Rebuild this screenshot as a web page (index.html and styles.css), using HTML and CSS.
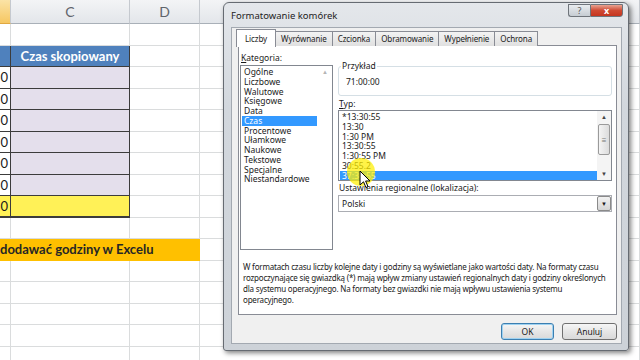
FILE: index.html
```html
<!DOCTYPE html>
<html lang="pl">
<head>
  <meta charset="UTF-8">
  <title>Formatowanie komórek</title>
  <link rel="stylesheet" href="styles.css">
</head>
<body>
<div class="screen">

  <!-- arkusz w tle -->
  <div class="sheet">
    <div class="hdr sel"></div><div class="hdr">C</div><div class="hdr">D</div><div class="hdr"></div>

    <div></div><div></div><div></div><div></div>

    <div class="t-b t-head"></div><div class="t-c t-head">Czas skopiowany</div><div></div><div></div>

    <div class="t-b num">0</div><div class="t-c lav"></div><div></div><div></div>
    <div class="t-b num">0</div><div class="t-c lav"></div><div></div><div></div>
    <div class="t-b num">0</div><div class="t-c lav"></div><div></div><div></div>
    <div class="t-b num">0</div><div class="t-c lav"></div><div></div><div></div>
    <div class="t-b num">0</div><div class="t-c lav"></div><div></div><div></div>
    <div class="t-b num">0</div><div class="t-c lav"></div><div></div><div></div>
    <div class="t-b num yel last">0</div><div class="t-c yel last"></div><div></div><div></div>

    <div></div><div></div><div></div><div></div>

    <div class="banner">dodawać godziny w Excelu</div><div></div>

    <div></div><div></div><div></div><div></div>
    <div></div><div></div><div></div><div></div>
    <div></div><div></div><div></div><div></div>
    <div></div><div></div><div></div><div></div>
    <div></div><div></div><div></div><div></div>
  </div>

  <!-- okno dialogowe -->
  <div class="dialog">
    <div class="titlebar">
      <span class="title">Formatowanie komórek</span>
      <div class="caption">
        <span class="cap-help">?</span>
        <span class="cap-close">x</span>
      </div>
    </div>

    <div class="client">
      <div class="tabs">
        <span class="tab active">Liczby</span>
        <span class="tab">Wyrównanie</span>
        <span class="tab">Czcionka</span>
        <span class="tab">Obramowanie</span>
        <span class="tab">Wypełnienie</span>
        <span class="tab">Ochrona</span>
      </div>

      <div class="panel">
        <div class="cols">
          <div class="col-left">
            <div class="lbl"><u>K</u>ategoria:</div>
            <div class="listbox cat">
              <div class="items">
                <div class="item">Ogólne</div>
                <div class="item">Liczbowe</div>
                <div class="item">Walutowe</div>
                <div class="item">Księgowe</div>
                <div class="item">Data</div>
                <div class="item selected">Czas</div>
                <div class="item">Procentowe</div>
                <div class="item">Ułamkowe</div>
                <div class="item">Naukowe</div>
                <div class="item">Tekstowe</div>
                <div class="item">Specjalne</div>
                <div class="item">Niestandardowe</div>
              </div>
              <div class="vscroll off">
                <span class="arrow">▲</span>
              </div>
            </div>
          </div>

          <div class="col-right">
            <fieldset class="group">
              <legend>Przykład</legend>
              <div class="sample">71:00:00</div>
            </fieldset>

            <div class="lbl typ"><u>T</u>yp:</div>
            <div class="listbox types">
              <div class="items">
                <div class="item">*13:30:55</div>
                <div class="item">13:30</div>
                <div class="item">1:30 PM</div>
                <div class="item">13:30:55</div>
                <div class="item">1:30:55 PM</div>
                <div class="item">30:55.2</div>
                <div class="item selected">37:30:55</div>
              </div>
              <div class="vscroll">
                <span class="sb-btn">▲</span>
                <span class="sb-thumb">≡</span>
                <span class="sb-track"></span>
                <span class="sb-btn">▼</span>
              </div>
            </div>

            <div class="lbl">Ustawienia regionalne (lokalizacja):</div>
            <div class="combo">
              <span class="combo-text">Polski</span>
              <span class="combo-btn">▼</span>
            </div>
          </div>
        </div>

        <p class="note">W formatach czasu liczby kolejne daty i godziny są wyświetlane jako wartości daty. Na formaty czasu<br>rozpoczynające się gwiazdką (*) mają wpływ zmiany ustawień regionalnych daty i godziny określonych<br>dla systemu operacyjnego. Na formaty bez gwiazdki nie mają wpływu ustawienia systemu<br>operacyjnego.</p>
      </div>

      <div class="buttons">
        <button class="btn default">OK</button>
        <button class="btn">Anuluj</button>
      </div>
    </div>
  </div>

  <!-- podświetlenie kursora -->
  <div class="spot"></div>
  <svg class="cursor" width="12" height="19" viewBox="0 0 12 19">
    <path d="M1 1 L1 15 L4.5 11.8 L7 17.5 L9 16.6 L6.6 11 L11 11 Z" fill="#fff" stroke="#000" stroke-width="1"/>
  </svg>

</div>
</body>
</html>
```

FILE: styles.css
```css
* {
  box-sizing: border-box;
}

body {
  margin: 0;
  background: #fff;
  font-family: Lato, 'Open Sans', sans-serif;
}

.screen {
  position: relative;
  width: 640px;
  height: 360px;
  overflow: hidden;
}

/* Arkusz */
.sheet {
  display: grid;
  grid-template-columns: 11px 119px 70px 1fr;
  grid-template-rows: 24px;
  grid-auto-rows: 21.5px;
}

.sheet > div {
  border-right: 1px solid #dadcdd;
  border-bottom: 1px solid #dadcdd;
  font-size: 13px;
  line-height: 21px;
  white-space: nowrap;
  overflow: hidden;
  color: #1a1a1a;
}

.sheet > .hdr {
  background: linear-gradient(#f3f4f6, #e3e6ea);
  border-right-color: #c5c9cf;
  border-bottom-color: #a9b0b8;
  text-align: center;
  line-height: 24px;
  font-size: 14px;
  color: #5f646b;
}

.sheet > .hdr.sel {
  background: linear-gradient(#fbe3a6, #f6c762);
  border-bottom-color: #e0a840;
}

.sheet > .t-b,
.sheet > .t-c {
  border-right: 1px solid #3c3c3c;
  border-bottom: 1px solid #3c3c3c;
}

.sheet > .t-head {
  background: #4f81bd;
  color: #fff;
  font-weight: bold;
  text-align: center;
}

.sheet > .lav {
  background: #e4dfec;
}

.sheet > .num {
  text-align: right;
  padding-right: 2px;
}

.sheet > .yel {
  background: #fff157;
}

.sheet > .last {
  border-bottom: 2px solid #3c3c3c;
}

.sheet > .banner {
  grid-column: span 3;
  background: #ffc000;
  font-weight: bold;
  color: #262626;
  border-right: none;
  border-bottom: none;
}

/* Okno dialogowe */
.dialog {
  position: absolute;
  left: 223px;
  top: 2px;
  width: 406px;
  height: 349px;
  display: flex;
  flex-direction: column;
  padding: 0 6px 6px 7px;
  background: linear-gradient(#e4e7eb, #d2d7dd 30%, #cdd2d8);
  border: 1px solid #666b72;
  border-radius: 6px 6px 3px 3px;
  box-shadow: 2px 2px 5px rgba(0,0,0,0.5);
  font-family: 'Noto Sans', 'Open Sans', sans-serif;
  font-size: 8.5px;
  color: #1a1a1a;
}

.titlebar {
  position: relative;
  height: 25px;
  display: flex;
  align-items: center;
}

.title {
  font-size: 9.5px;
  color: #222;
}

.caption {
  position: absolute;
  top: 1px;
  right: -1px;
  display: flex;
}

.cap-help,
.cap-close {
  height: 13px;
  line-height: 12px;
  text-align: center;
  border: 1px solid #6f747b;
  font-size: 9px;
}

.cap-help {
  width: 22px;
  background: linear-gradient(#e9ecef, #c6ccd3);
  color: #555;
  border-radius: 0 0 0 3px;
  border-right: none;
}

.cap-close {
  width: 33px;
  background: linear-gradient(#e8a493, #cf4a33 50%, #c5351f);
  color: #fff;
  font-weight: bold;
  border-radius: 0 0 3px 0;
}

.client {
  flex: 1;
  display: flex;
  flex-direction: column;
  padding: 3px 4px 3px 6px;
  background: #f0f0f0;
  border: 1px solid #a3a9b1;
}

.tabs {
  display: flex;
  height: 15px;
  position: relative;
  z-index: 1;
}

.tab {
  height: 15px;
  padding: 0 5px;
  line-height: 14px;
  font-size: 8px;
  letter-spacing: -0.1px;
  background: linear-gradient(#f3f3f3, #e0e0e0);
  border: 1px solid #898c95;
  border-left: none;
  border-bottom: none;
  color: #222;
}

.tab.active {
  height: 18px;
  margin-top: -2px;
  margin-left: -2px;
  padding: 0 8px;
  line-height: 17px;
  background: #fff;
  border-left: 1px solid #898c95;
}

.panel {
  height: 270px;
  display: flex;
  flex-direction: column;
  padding: 6px 4px 0 1px;
  background: #fff;
  border: 1px solid #898c95;
  margin-top: -1px;
}

.cols {
  display: flex;
  gap: 5px;
}

.col-left {
  width: 93px;
}

.col-right {
  flex: 1;
}

.lbl {
  height: 11px;
  line-height: 11px;
  padding-left: 1px;
  margin-bottom: 2px;
  white-space: nowrap;
}

.listbox {
  display: flex;
  border: 1px solid #828790;
  background: #fff;
}

.listbox .items {
  flex: 1;
  padding: 1px;
}

.item {
  height: 9.75px;
  line-height: 9.75px;
  padding-left: 2px;
  white-space: nowrap;
}

.item.selected {
  background: #3399ff;
  color: #fff;
}

.cat {
  height: 185px;
}

.cat .items {
  padding-top: 1px;
}

.vscroll {
  width: 14px;
  display: flex;
  flex-direction: column;
  background: #f4f4f4;
}

.vscroll.off {
  background: #fff;
}

.vscroll .arrow {
  text-align: center;
  font-size: 6px;
  line-height: 12px;
  color: #b5b5b5;
}

.sb-btn {
  height: 12px;
  text-align: center;
  font-size: 6px;
  line-height: 12px;
  color: #444;
}

.sb-thumb {
  height: 31px;
  margin: 1px 1px 0;
  text-align: center;
  line-height: 30px;
  font-size: 8px;
  color: #777;
  background: linear-gradient(90deg, #f4f4f4, #dcdcdc);
  border: 1px solid #9a9a9a;
  border-radius: 2px;
}

.sb-track {
  flex: 1;
}

.group {
  height: 35px;
  margin: 9px 0 2px;
  padding: 5px 7px 0;
  border: 1px solid #d5dfe5;
  border-radius: 3px;
}

.group legend {
  padding: 0 1px;
  margin-left: -5px;
  line-height: 10px;
}

.sample {
  line-height: 12px;
}

.typ {
  margin-bottom: 1px;
}

.types {
  height: 71px;
  margin-bottom: 1px;
}

.types .items {
  padding: 1px 0 0 1px;
}

.combo {
  height: 17px;
  display: flex;
  align-items: center;
  border: 1px solid #abadb3;
}

.combo-text {
  flex: 1;
  padding-left: 3px;
}

.combo-btn {
  width: 14px;
  height: 15px;
  text-align: center;
  line-height: 14px;
  font-size: 6px;
  background: linear-gradient(#f2f2f2, #d5d5d5);
  border: 1px solid #8a8a8a;
  border-radius: 2px;
}

.note {
  margin: auto 0 9px 3px;
  line-height: 11px;
  font-size: 8px;
  letter-spacing: -0.2px;
  white-space: nowrap;
}

.buttons {
  display: flex;
  justify-content: flex-end;
  gap: 8px;
  margin-top: 8px;
}

.btn {
  width: 55px;
  height: 17px;
  padding: 0;
  font-family: inherit;
  font-size: 8.5px;
  color: #1a1a1a;
  background: linear-gradient(#f6f6f6, #e6e6e6 50%, #d9d9d9);
  border: 1px solid #707070;
  border-radius: 3px;
}

.btn.default {
  width: 53px;
  border-color: #3c7fb1;
  box-shadow: inset 0 0 0 1px #9fd2f1;
}

/* Podświetlenie kursora */
.spot {
  position: absolute;
  left: 347px;
  top: 158px;
  width: 28px;
  height: 28px;
  border-radius: 50%;
  background: rgba(255,238,0,0.72);
}

.cursor {
  position: absolute;
  left: 359px;
  top: 170px;
}
```
